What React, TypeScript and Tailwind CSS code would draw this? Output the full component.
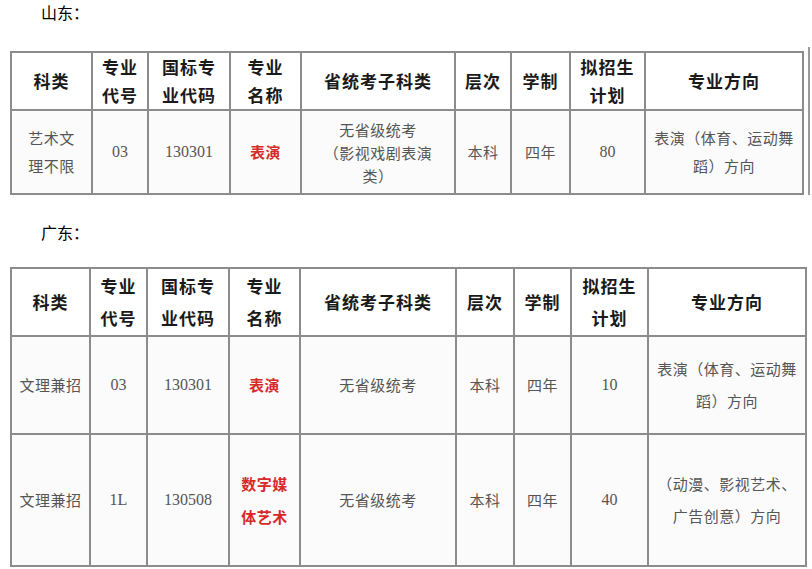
import React from "react";

const cjk = '"Noto Sans CJK SC", "Noto Sans", sans-serif';
const serif = '"Liberation Serif", "Noto Sans CJK SC", serif';

type Cell = { text: React.ReactNode; red?: boolean; num?: boolean; lh?: string };

const head = [
  ["科类"],
  ["专业", "代号"],
  ["国标专", "业代码"],
  ["专业", "名称"],
  ["省统考子科类"],
  ["层次"],
  ["学制"],
  ["拟招生", "计划"],
  ["专业方向"],
];

function Lines({ lines }: { lines: string[] }) {
  return (
    <>
      {lines.map((l, i) => (
        <div key={i}>{l}</div>
      ))}
    </>
  );
}

function HeaderRow({ height, lh }: { height: string; lh: string }) {
  return (
    <tr className={height}>
      {head.map((h, i) => (
        <th
          key={i}
          className={`border-2 border-[#8c8c8c] bg-white p-0 text-center align-middle text-[17px] font-bold tracking-[1px] text-[#1a1a1a] ${lh}`}
        >
          <Lines lines={h} />
        </th>
      ))}
    </tr>
  );
}

function BodyRow({ cells, height }: { cells: Cell[]; height: string }) {
  return (
    <tr className={height}>
      {cells.map((c, i) => (
        <td
          key={i}
          className={`border-2 border-[#8c8c8c] bg-[#fbfbfb] p-0 text-center align-middle ${
            c.red ? "font-bold text-[#d62a2a]" : "text-[#555]"
          } ${c.num ? "text-[16px]" : "text-[15px] tracking-[0.5px]"} ${c.lh ?? "leading-[28px]"}`}
          style={{ fontFamily: c.num ? serif : cjk }}
        >
          {c.text}
        </td>
      ))}
    </tr>
  );
}

function Title({ children }: { children: React.ReactNode }) {
  return (
    <div className="pl-[41px] text-[16px] leading-[20px] text-black" style={{ fontFamily: cjk }}>
      {children}
    </div>
  );
}

export default function App() {
  return (
    <div className="min-h-screen w-[812px] bg-white pt-[2px]" style={{ fontFamily: cjk }}>
      <Title>山东：</Title>

      <div className="mt-[25px] flex pl-[10px]">
        <table className="mt-[4px] table-fixed border-collapse" style={{ fontFamily: cjk }}>
          <colgroup>
            <col className="w-[81px]" />
            <col className="w-[56px]" />
            <col className="w-[82px]" />
            <col className="w-[71px]" />
            <col className="w-[154px]" />
            <col className="w-[56px]" />
            <col className="w-[59px]" />
            <col className="w-[75px]" />
            <col className="w-[158px]" />
          </colgroup>
          <tbody>
            <HeaderRow height="h-[55px]" lh="leading-[28px]" />
            <BodyRow
              height="h-[84px]"
              cells={[
                { text: <Lines lines={["艺术文", "理不限"]} /> },
                { text: "03", num: true },
                { text: "130301", num: true },
                { text: "表演", red: true },
                { text: <Lines lines={["无省级统考", "（影视戏剧表演", "类）"]} />, lh: "leading-[23px]" },
                { text: "本科" },
                { text: "四年" },
                { text: "80", num: true },
                { text: <Lines lines={["表演（体育、运动舞", "蹈）方向"]} /> },
              ]}
            />
          </tbody>
        </table>
        <div className="ml-[4px] w-[2px] bg-[#9a9a9a]" />
      </div>

      <div className="mt-[27px]">
        <Title>广东：</Title>
      </div>

      <div className="mt-[25px] pl-[10px]">
        <table className="table-fixed border-collapse" style={{ fontFamily: cjk }}>
          <colgroup>
            <col className="w-[79px]" />
            <col className="w-[57px]" />
            <col className="w-[82px]" />
            <col className="w-[71px]" />
            <col className="w-[156px]" />
            <col className="w-[58px]" />
            <col className="w-[57px]" />
            <col className="w-[77px]" />
            <col className="w-[158px]" />
          </colgroup>
          <tbody>
            <HeaderRow height="h-[68px]" lh="leading-[32px]" />
            <BodyRow
              height="h-[98px]"
              cells={[
                { text: "文理兼招" },
                { text: "03", num: true },
                { text: "130301", num: true },
                { text: "表演", red: true },
                { text: "无省级统考" },
                { text: "本科" },
                { text: "四年" },
                { text: "10", num: true },
                { text: <Lines lines={["表演（体育、运动舞", "蹈）方向"]} />, lh: "leading-[32px]" },
              ]}
            />
            <BodyRow
              height="h-[132px]"
              cells={[
                { text: "文理兼招" },
                { text: "1L", num: true },
                { text: "130508", num: true },
                { text: <Lines lines={["数字媒", "体艺术"]} />, red: true, lh: "leading-[33px]" },
                { text: "无省级统考" },
                { text: "本科" },
                { text: "四年" },
                { text: "40", num: true },
                { text: <Lines lines={["（动漫、影视艺术、", "广告创意）方向"]} />, lh: "leading-[32px]" },
              ]}
            />
          </tbody>
        </table>
      </div>
    </div>
  );
}
